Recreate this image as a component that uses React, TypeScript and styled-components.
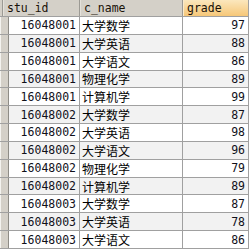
import React from 'react'
import styled, { createGlobalStyle } from 'styled-components'

const GlobalStyle = createGlobalStyle`
  html, body {
    margin: 0;
    padding: 0;
    background: #ffffff;
  }
  body {
    font-family: "DejaVu Sans Mono", "Noto Sans CJK SC", monospace;
    font-size: 11.5px;
    color: #000;
  }
`

type Score = { id: string; course: string; grade: number }

const rows: Score[] = [
  { id: '16048001', course: '大学数学', grade: 97 },
  { id: '16048001', course: '大学英语', grade: 88 },
  { id: '16048001', course: '大学语文', grade: 86 },
  { id: '16048001', course: '物理化学', grade: 89 },
  { id: '16048001', course: '计算机学', grade: 99 },
  { id: '16048002', course: '大学数学', grade: 87 },
  { id: '16048002', course: '大学英语', grade: 98 },
  { id: '16048002', course: '大学语文', grade: 96 },
  { id: '16048002', course: '物理化学', grade: 79 },
  { id: '16048002', course: '计算机学', grade: 89 },
  { id: '16048003', course: '大学数学', grade: 87 },
  { id: '16048003', course: '大学英语', grade: 78 },
  { id: '16048003', course: '大学语文', grade: 86 },
]

const App: React.FC = () => {
  return (
    <>
      <GlobalStyle />
      <Grid>
        <HeaderRow>
          <Corner />
          <HeadCell $w={77}>stu_id</HeadCell>
          <HeadCell $w={103}>c_name</HeadCell>
          <HeadCell $w={65} $sorted>grade</HeadCell>
        </HeaderRow>
        {rows.map((r, i) => (
          <Row key={i} $alt={i % 2 === 1}>
            <Indicator />
            <NumCell $w={71}>{r.id}</NumCell>
            <TextCell $w={103}>{r.course}</TextCell>
            <NumCell $w={65}>{r.grade}</NumCell>
          </Row>
        ))}
      </Grid>
    </>
  )
}

const Grid = styled.div`
  display: flex;
  flex-direction: column;
  width: 248px;
  border-right: 1px solid #a0a0a0;
`

const HeaderRow = styled.div`
  display: flex;
  height: 16px;
  border-bottom: 1px solid #a0a0a0;
  background: #d4d0c8;
`

const Corner = styled.div`
  width: 2px;
  border-right: 1px solid #9c9a94;
`

const HeadCell = styled.div<{ $w: number; $sorted?: boolean }>`
  box-sizing: border-box;
  width: ${p => p.$w}px;
  padding-left: 3px;
  display: flex;
  align-items: center;
  border-right: 1px solid ${p => (p.$sorted ? 'transparent' : '#9c9a94')};
  border-left: 1px solid ${p => (p.$sorted ? '#fbeacb' : '#e4e1da')};
  background: ${p => (p.$sorted ? 'linear-gradient(#fbe7bd, #f6c778)' : '#d4d0c8')};
  color: #1a1208;
  line-height: 16px;
`

const Row = styled.div<{ $alt: boolean }>`
  display: flex;
  height: 16.85px;
  border-bottom: 1px solid #a0a0a0;
  background: ${p => (p.$alt ? '#f2f2f2' : '#ffffff')};
`

const Indicator = styled.div`
  box-sizing: border-box;
  width: 9px;
  background: #d4d0c8;
  border-left: 1px solid #f4f3ef;
  border-right: 1px solid #8e8c86;
`

const Cell = styled.div<{ $w: number }>`
  box-sizing: border-box;
  width: ${p => p.$w}px;
  display: flex;
  align-items: center;
  border-right: 1px solid #a0a0a0;
  white-space: nowrap;
  overflow: hidden;
  &:last-child {
    border-right: none;
  }
`

const NumCell = styled(Cell)`
  justify-content: flex-end;
  padding-right: 3px;
  color: #10101a;
`

const TextCell = styled(Cell)`
  padding-left: 2px;
  font-family: "Noto Sans CJK SC", sans-serif;
  font-size: 12px;
  color: #000;
`

export default App
